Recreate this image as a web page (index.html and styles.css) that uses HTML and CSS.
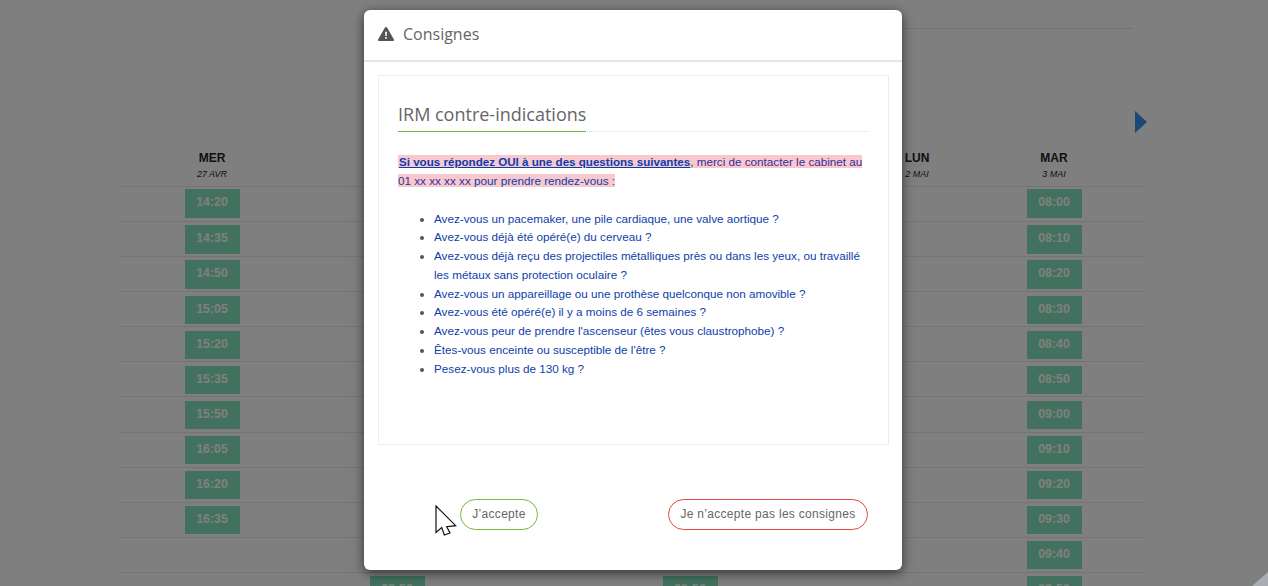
FILE: index.html
```html
<!DOCTYPE html>
<html lang="fr">
<head>
<meta charset="utf-8">
<title>Consignes</title>
<link rel="stylesheet" href="styles.css">
</head>
<body>
<main class="page">
  <div class="top-rule"></div>
  <div class="nav">
    <svg class="nav-arrow" viewBox="0 0 12 22" width="12" height="22"><path d="M0 0 12 11 0 22Z"/></svg>
  </div>
  <section class="schedule">
    <div class="row head">
      <div class="day c1"><strong>MER</strong><em>27 AVR</em></div>
      <div class="day c5"><strong>LUN</strong><em>2 MAI</em></div>
      <div class="day c6"><strong>MAR</strong><em>3 MAI</em></div>
    </div>
    <div class="row"><span class="slot c1">14:20</span><span class="slot c6">08:00</span></div>
    <div class="row"><span class="slot c1">14:35</span><span class="slot c6">08:10</span></div>
    <div class="row"><span class="slot c1">14:50</span><span class="slot c6">08:20</span></div>
    <div class="row"><span class="slot c1">15:05</span><span class="slot c6">08:30</span></div>
    <div class="row"><span class="slot c1">15:20</span><span class="slot c6">08:40</span></div>
    <div class="row"><span class="slot c1">15:35</span><span class="slot c6">08:50</span></div>
    <div class="row"><span class="slot c1">15:50</span><span class="slot c6">09:00</span></div>
    <div class="row"><span class="slot c1">16:05</span><span class="slot c6">09:10</span></div>
    <div class="row"><span class="slot c1">16:20</span><span class="slot c6">09:20</span></div>
    <div class="row"><span class="slot c1">16:35</span><span class="slot c6">09:30</span></div>
    <div class="row"><span class="slot c6">09:40</span></div>
    <div class="row"><span class="slot c2">08:50</span><span class="slot c4">08:50</span><span class="slot c6">09:50</span></div>
  </section>
</main>
<div class="overlay"></div>
<div class="corner"></div>
<div class="modal">
  <header class="modal-head">
    <svg class="warn" viewBox="0 0 16 14" width="16" height="14"><path fill-rule="evenodd" d="M8 0c.5 0 .9.3 1.2.7l6.600 11.600c.5.8-.1 1.700-1 1.700H1.200c-.9 0-1.500-.9-1-1.700L6.800.7C7.100.3 7.500 0 8 0ZM7.100 4.800l.2 4.300h1.400l.2-4.300ZM7.200 10.100v1.700h1.600v-1.700Z"/></svg>
    <h1>Consignes</h1>
  </header>
  <div class="modal-body">
    <h2><span>IRM contre-indications</span></h2>
    <p class="intro"><mark><strong>Si vous répondez OUI à une des questions suivantes</strong>, merci de contacter le cabinet au 01 xx xx xx xx <b>pour prendre rendez-vous :</b></mark></p>
    <ul>
      <li>Avez-vous un pacemaker, une pile cardiaque, une valve aortique ?</li>
      <li>Avez-vous déjà été opéré(e) du cerveau ?</li>
      <li>Avez-vous déjà reçu des projectiles métalliques près ou dans les yeux, ou travaillé les métaux sans protection oculaire ?</li>
      <li>Avez-vous un appareillage ou une prothèse quelconque non amovible ?</li>
      <li>Avez-vous été opéré(e) il y a moins de 6 semaines ?</li>
      <li>Avez-vous peur de prendre l'ascenseur (êtes vous claustrophobe) ?</li>
      <li>Êtes-vous enceinte ou susceptible de l'être ?</li>
      <li>Pesez-vous plus de 130 kg ?</li>
    </ul>
  </div>
  <footer class="modal-foot">
    <button class="btn accept">J’accepte</button>
    <button class="btn refuse">Je n’accepte pas les consignes</button>
  </footer>
</div>
<svg class="cursor" viewBox="0 0 22 32" width="22" height="32"><path d="M1 1V27.500L6.700 22.500 9.300 30 15 28 11.700 21.700 20.700 20.700Z"/></svg>
</body>
</html>
```
FILE: styles.css
```css
* { box-sizing: border-box; }
html, body { margin: 0; height: 586px; overflow: hidden; }
body { background: #fff; font-family: "Liberation Sans", Arial, sans-serif; color: #333; position: relative; }

.page { padding-left: 120px; width: 1268px; height: 586px; overflow: hidden; }
.top-rule { margin: 28px 0 0 500px; width: 513px; height: 1px; background: #e6e6e6; }
.nav { margin-top: 82px; height: 22px; width: 1027px; display: flex; justify-content: flex-end; }
.nav-arrow { fill: #3690ea; display: block; }

.schedule { width: 1026px; margin-top: 18px; }
.row {
  display: grid;
  grid-template-columns: 184px 186px 18px 364px 90px 184px;
  height: 35.09px;
  border-bottom: 1px solid #e8e8e8;
}
.row.head { height: 36px; }
.c1 { grid-column: 1; }
.c2 { grid-column: 2; }
.c4 { grid-column: 4; }
.c5 { grid-column: 5; }
.c6 { grid-column: 6; }
.day { text-align: center; display: flex; flex-direction: column; align-items: center; color: #222; }
.day strong { font-size: 12px; line-height: 14px; }
.day em { font-size: 9px; line-height: 11px; margin-top: 4px; }
.slot {
  justify-self: center;
  width: 55px;
  height: 28.2px;
  margin-top: 3.3px;
  background: #84e4be;
  color: #fff;
  font-size: 12.4px;
  font-weight: 700;
  line-height: 26px;
  text-align: center;
}
.row:nth-child(2) .slot { margin-top: 2.4px; height: 29px; }

.overlay { position: absolute; inset: 0; background: rgba(0, 0, 0, .5); }
.corner {
  position: absolute; right: 0; bottom: 0; width: 16px; height: 14px;
  background: #a9adb1;
  clip-path: polygon(100% 0, 100% 100%, 0 100%);
}

.modal {
  position: absolute; left: 364px; top: 10px; width: 538px; height: 560px;
  background: #fff; border-radius: 6px;
  box-shadow: 0 3px 12px rgba(0, 0, 0, .6);
  display: flex; flex-direction: column;
}
.modal-head {
  height: 52px; flex: none; padding: 0 14px 2px;
  display: flex; align-items: center; gap: 9px;
  border-bottom: 2px solid #e5e5e5;
}
.warn { fill: #555; display: block; flex: none; }
.modal-head h1 { margin: 0; font: 400 16px/1 "Open Sans", sans-serif; color: #666; }

.modal-body {
  margin: 13px 13px 0 14px; height: 370px; flex: none;
  border: 1px solid #eee; padding: 26px 20px 0 19px;
}
.modal-body h2 {
  margin: 0; height: 30px;
  font: 400 18px/24px "Open Sans", sans-serif; color: #666;
  border-bottom: 1px dotted #ddd;
}
.modal-body h2 span { display: inline-block; height: 30px; border-bottom: 1px solid #6fb737; }
.intro { margin: 21px 0 0; font-size: 11.7px; line-height: 18.75px; color: #2f2f9e; }
mark { background: #f9c8cc; color: inherit; }
.intro strong { font-size: 11.6px; padding-left: 1px; color: #0a3eb0; text-decoration: underline; }
.intro b { font-weight: 400; color: #0a3eb0; }
ul { margin: 19px 0 0; padding: 0 0 0 36px; font-size: 11.7px; line-height: 18.75px; color: #0f3eaa; }
li::marker { color: #555; }

.modal-foot {
  display: flex; justify-content: space-between;
  padding: 54px 34px 0 96px;
}
.btn {
  height: 31px; border-radius: 15.5px; background: #fff; color: #666;
  font: 400 12px/1 "Liberation Sans", sans-serif; padding: 0 0 2px; letter-spacing: .3px;
  white-space: nowrap; cursor: pointer;
}
.accept { border: 1px solid #7ab83f; width: 78px; }
.refuse { border: 1px solid #e7483c; width: 200px; }

.cursor { position: absolute; left: 435px; top: 505px; fill: #fff; stroke: #111; stroke-width: 1.2; }
```
